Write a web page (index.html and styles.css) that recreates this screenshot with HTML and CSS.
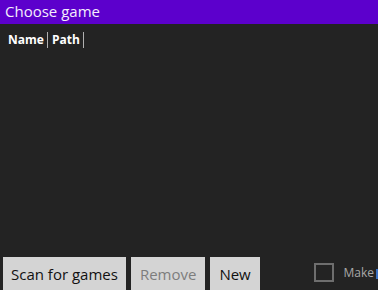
FILE: index.html
```html
<!DOCTYPE html>
<html>
<head>
  <meta charset="utf-8">
  <link rel="stylesheet" href="styles.css">
</head>
<body>
  <div class="window">
    <div class="title-bar">Choose game</div>

    <div class="game-list">
      <div class="list-header">
        <span class="col-header">Name</span>
        <span class="col-header">Path</span>
      </div>
    </div>

    <div class="footer">
      <button class="action-btn scan-btn">Scan for games</button>
      <button class="action-btn" disabled>Remove</button>
      <button class="action-btn">New</button>
      <label class="make-option">
        <span class="check-box"></span>
        <span class="check-label">Make</span>
        <span class="edge-mark"></span>
      </label>
    </div>
  </div>
</body>
</html>
```

FILE: styles.css
```css
html, body {
  margin: 0;
  padding: 0;
  background: #232323;
  overflow: hidden;
}

.window {
  width: 378px;
  height: 290px;
  display: flex;
  flex-direction: column;
  font-family: "Open Sans", "Noto Sans", sans-serif;
  color: #ffffff;
}

.title-bar {
  height: 24px;
  flex-shrink: 0;
  background: #5c00cc; /* accent purple */
  padding-left: 5px;
  font-size: 15px;
  line-height: 23px;
  color: #f4eefc;
}

.game-list {
  flex: 1;
  min-height: 0;
}

.list-header {
  display: flex;
  padding: 8px 0 0 8px;
}

.col-header {
  font-size: 12px;
  font-weight: 700;
  line-height: 16px;
  padding-right: 3px;
  margin-right: 4px;
  border-right: 1px solid #b0b0b0;
}

/* Bottom action row */
.footer {
  display: flex;
  align-items: flex-start;
  height: 33px;
  padding-left: 3px;
  flex-shrink: 0;
}

.action-btn {
  height: 33px;
  margin-right: 5px;
  padding: 0 9px;
  background: #d4d4d4;
  border: none;
  border-radius: 0;
  font-family: inherit;
  font-size: 15px;
  color: #111111;
  cursor: pointer;
}

.scan-btn {
  padding: 0 8px;
}

.action-btn:disabled {
  color: #7d7d7d;
  cursor: default;
}

.make-option {
  display: flex;
  align-items: flex-start;
  margin-left: auto;
  height: 33px;
  white-space: nowrap;
}

.check-box {
  width: 16px;
  height: 15px;
  margin-top: 6px;
  border: 2px solid #6e6e6e;
  margin-right: 9px;
}

.check-label {
  margin-top: 8px;
  font-size: 12px;
  line-height: 16px;
  color: #a8a8a8;
}

.edge-mark {
  width: 2px;
  height: 10px;
  margin-top: 12px;
  margin-left: 2px;
  background: #3a6fc0;
}
```
